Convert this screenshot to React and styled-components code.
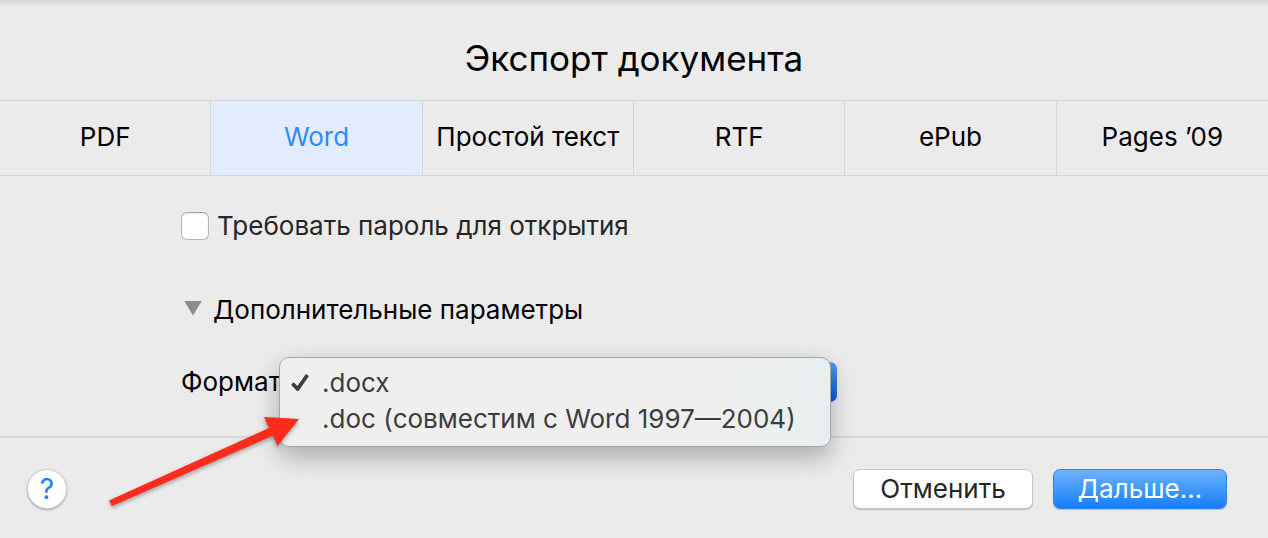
import React, { useState } from 'react';
import styled, { createGlobalStyle } from 'styled-components';

const GlobalStyle = createGlobalStyle`
  * {
    box-sizing: border-box;
  }

  body {
    margin: 0;
    background: #ebebeb;
    color: #000;
    font-family: Inter, Roboto, "Liberation Sans", sans-serif;
    font-size: 26px;
    line-height: 36px;
  }

  button,
  select {
    font: inherit;
  }
`;

const Dialog = styled.main`
  display: flex;
  flex-direction: column;
  min-height: 100vh;
  background: linear-gradient(#d8d8d8 0, #d8d8d8 2px, #e6e6e6 5px, #ebebeb 6px);
`;

const Title = styled.h1`
  margin: 0;
  padding: 34px 20px 18px;
  font-size: 35px;
  font-weight: 400;
  line-height: 48px;
  text-align: center;
`;

const Tabs = styled.div`
  display: grid;
  grid-template-columns: repeat(6, 1fr);
  border-top: 1px solid #d6d6d6;
  border-bottom: 1px solid #d6d6d6;
`;

const Tab = styled.button`
  height: 74px;
  padding: 0 0 2px;
  border: 0;
  border-right: 1px solid #d6d6d6;
  background: ${(props) => (props.$active ? '#e3ecfe' : 'transparent')};
  color: ${(props) => (props.$active ? '#2f8bfb' : '#000')};
  white-space: nowrap;

  &:last-child {
    border-right: 0;
  }
`;

const Options = styled.section`
  display: flex;
  flex-direction: column;
  align-items: flex-start;
  padding: 32px 20px 34px 181px;
`;

const CheckLabel = styled.label`
  display: flex;
  align-items: center;
  gap: 8px;
  height: 36px;
  color: #262626;
`;

const Checkbox = styled.input`
  appearance: none;
  width: 28px;
  height: 28px;
  margin: 0;
  border: 1px solid #b9b9b9;
  border-top-color: #a6a6a6;
  border-radius: 6px;
  background: #fff;
  box-shadow: inset 0 1px 2px #e4e4e4;

  &:checked {
    background: #2f8bfb;
  }
`;

const Disclosure = styled.button`
  display: flex;
  align-items: center;
  gap: 11px;
  margin: 48px 0 34px;
  padding: 0 0 0 3px;
  border: 0;
  background: none;
  color: #000;
`;

const Triangle = styled.span`
  width: 18px;
  height: 15px;
  margin-bottom: 4px;
  background: #8b8b8b;
  clip-path: polygon(0 0, 100% 0, 50% 100%);
`;

const FormatRow = styled.div`
  position: relative;
  display: flex;
  align-items: center;
  width: 656px;
  height: 40px;
`;

const FormatLabel = styled.label`
  flex: 0 0 106px;
`;

const FormatSelect = styled.select`
  appearance: none;
  flex: 1;
  height: 40px;
  padding: 0 36px;
  border: 0;
  border-radius: 7px;
  background: linear-gradient(to bottom, #4c9bfb, #1058d8) right / 36px 100% no-repeat #fff;
  color: #262626;
`;

const Menu = styled.ul`
  position: absolute;
  top: -5px;
  right: 6px;
  width: 552px;
  margin: 0;
  padding: 7px 0 9px;
  border: 1px solid #a6a6a6;
  border-radius: 10px;
  background: linear-gradient(80deg, #efefef 75%, #e8eff0);
  box-shadow: 0 10px 24px rgba(0, 0, 0, 0.28);
  color: #3d3d3d;
  list-style: none;
`;

const MenuItem = styled.li`
  display: grid;
  grid-template-columns: 24px 1fr;
  column-gap: 10px;
  align-items: center;
  padding-left: 8px;
  white-space: nowrap;
  cursor: default;

  svg {
    display: block;
  }
`;

const Footer = styled.footer`
  display: flex;
  align-items: center;
  flex: 1;
  gap: 20px;
  padding: 2px 41px 0 27px;
  border-top: 2px solid #d8d8d8;
`;

const HelpButton = styled.button`
  width: 40px;
  height: 40px;
  margin-right: auto;
  padding: 0;
  border: 1px solid #cfcfcf;
  border-radius: 50%;
  background: #fff;
  box-shadow: 0 1px 2px rgba(0, 0, 0, 0.3);
  color: #1a80fb;
  font-size: 28px;
`;

const Button = styled.button`
  width: ${(props) => (props.$primary ? '174px' : '180px')};
  height: 40px;
  padding: 0;
  border: 1px solid ${(props) => (props.$primary ? '#2f86f0' : '#c6c6c6')};
  border-radius: 7px;
  background: ${(props) => (props.$primary ? 'linear-gradient(#6db3fa, #157efb)' : '#fff')};
  box-shadow: 0 1px 1px rgba(0, 0, 0, 0.2);
  color: ${(props) => (props.$primary ? '#fff' : '#262626')};
`;

const Pointer = styled.svg`
  position: absolute;
  top: 52px;
  left: -75px;
  width: 200px;
  height: 100px;
  overflow: visible;
  filter: drop-shadow(0 2px 2px rgba(0, 0, 0, 0.35));
  pointer-events: none;
`;

const tabs = ['PDF', 'Word', 'Простой текст', 'RTF', 'ePub', 'Pages ’09'];
const formats = ['.docx', '.doc (совместим с Word 1997—2004)'];

const CheckMark = () => (
  <svg width="24" height="24" viewBox="0 0 24 24" fill="none" aria-hidden="true">
    <path d="M4.4 12.5 L9.6 18 L19.4 4" stroke="#3d3d3d" strokeWidth="3.8" strokeLinejoin="round" />
  </svg>
);

const FormatField = () => {
  const [format, setFormat] = useState(formats[0]);

  return (
    <FormatRow>
      <FormatLabel htmlFor="format">Формат</FormatLabel>
      <FormatSelect id="format" value={format} onChange={(e) => setFormat(e.target.value)}>
        {formats.map((name) => (
          <option key={name}>{name}</option>
        ))}
      </FormatSelect>
      <Menu role="listbox" aria-label="Формат">
        {formats.map((name) => (
          <MenuItem
            key={name}
            role="option"
            aria-selected={name === format}
            onClick={() => setFormat(name)}
          >
            <span>{name === format && <CheckMark />}</span>
            {name}
          </MenuItem>
        ))}
      </Menu>
      <Pointer viewBox="0 0 200 100" aria-hidden="true">
        <path d="M3 86.5 L163 14 L158 3 L193 5 L171.500 32 L167 21.500 L6 92 Z" fill="#fd2b1c" />
      </Pointer>
    </FormatRow>
  );
};

const App = () => {
  const [tab, setTab] = useState('Word');

  return (
    <>
      <GlobalStyle />
      <Dialog>
        <Title>Экспорт документа</Title>
        <Tabs role="tablist">
          {tabs.map((name) => (
            <Tab
              key={name}
              role="tab"
              aria-selected={name === tab}
              $active={name === tab}
              onClick={() => setTab(name)}
            >
              {name}
            </Tab>
          ))}
        </Tabs>
        <Options>
          <CheckLabel>
            <Checkbox type="checkbox" />
            Требовать пароль для открытия
          </CheckLabel>
          <Disclosure aria-expanded="true">
            <Triangle />
            Дополнительные параметры
          </Disclosure>
          <FormatField />
        </Options>
        <Footer>
          <HelpButton aria-label="Справка">?</HelpButton>
          <Button>Отменить</Button>
          <Button $primary>Дальше…</Button>
        </Footer>
      </Dialog>
    </>
  );
};

export default App;
